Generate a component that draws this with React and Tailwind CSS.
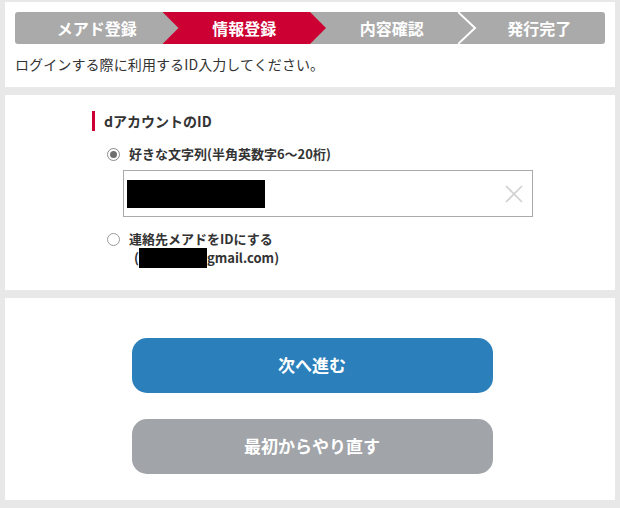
import React from 'react';

const font = { fontFamily: '"Noto Sans CJK JP", "Noto Sans", sans-serif' };

const steps = ['メアド登録', '情報登録', '内容確認', '発行完了'];

const Stepper = ({ current }) => (
  <div className="flex h-[32px] rounded-[3px] bg-[#aaaaaa] text-white font-bold text-[16px]">
    {steps.map((label, i) => (
      <div key={label} className="relative flex-1 flex items-center justify-center pl-[16px]">
        {i === current && (
          <div className="absolute top-0 bottom-0 left-0 right-[-16px] bg-[#cc0033] [clip-path:polygon(0_0,calc(100%-16px)_0,100%_50%,calc(100%-16px)_100%,0_100%,16px_50%)]" />
        )}
        {i > current + 1 && (
          <svg className="absolute left-0 top-0" width="20" height="32" viewBox="0 0 20 32">
            <polyline points="0,0 17,16 0,32" fill="none" stroke="#fff" strokeWidth="2" />
          </svg>
        )}
        <span className="relative leading-none">{label}</span>
      </div>
    ))}
  </div>
);

const Radio = ({ checked }) => (
  <span
    className={`flex h-[13px] w-[13px] shrink-0 items-center justify-center rounded-full border bg-white ${
      checked ? 'border-[#8a8a8a]' : 'border-[#9a9a9a]'
    }`}
  >
    {checked && <span className="h-[7px] w-[7px] rounded-full bg-[#6f6f6f]" />}
  </span>
);

export default function App() {
  return (
    <div className="flex h-[508px] w-[620px] flex-col gap-[8px] bg-[#e8e8e8] px-[5px] pt-[2px] text-[#333]" style={font}>
      <section className="h-[85px] bg-white px-[10px] pt-[10px]">
        <Stepper current={1} />
        <p className="mt-[10px] text-[14px] leading-[20px] tracking-[0.1px]">ログインする際に利用するID入力してください。</p>
      </section>

      <section className="h-[195px] bg-white pl-[87px] pt-[16px]">
        <h2 className="border-l-[3px] border-[#cc0033] pl-[9px] text-[14px] font-bold leading-[20px]">dアカウントのID</h2>

        <label className="mt-[13px] flex items-center gap-[9px] pl-[15px] text-[13px] font-bold leading-[20px]">
          <Radio checked />
          好きな文字列(半角英数字6～20桁)
        </label>
        <div className="ml-[31px] mt-[6px] flex h-[47px] w-[410px] items-center justify-between border border-[#aaaaaa] pl-[3px] pr-[9px]">
          <div className="h-[28px] w-[138px] bg-black" />
          <svg width="18" height="18" viewBox="0 0 18 18">
            <path d="M1 1 L17 17 M17 1 L1 17" stroke="#d0d0d0" strokeWidth="1.6" />
          </svg>
        </div>

        <label className="mt-[13px] flex items-start gap-[9px] pl-[15px] text-[13px] font-bold leading-[18px]">
          <span className="mt-[3px]"><Radio /></span>
          <span>
            連絡先メアドをIDにする
            <br />
            <span className="ml-[5px] inline-flex items-center">
              (<span className="inline-block h-[20px] w-[68px] bg-black" />gmail.com)
            </span>
          </span>
        </label>
      </section>

      <section className="flex h-[202px] flex-col items-center gap-[26px] bg-white pl-[4px] pt-[40px]">
        <button className="h-[55px] w-[361px] rounded-[15px] bg-[#2b80bb] pb-[2px] text-[17px] font-bold text-white">次へ進む</button>
        <button className="h-[55px] w-[361px] rounded-[15px] bg-[#a1a4a8] pb-[2px] text-[17px] font-bold text-white">最初からやり直す</button>
      </section>
    </div>
  );
}
